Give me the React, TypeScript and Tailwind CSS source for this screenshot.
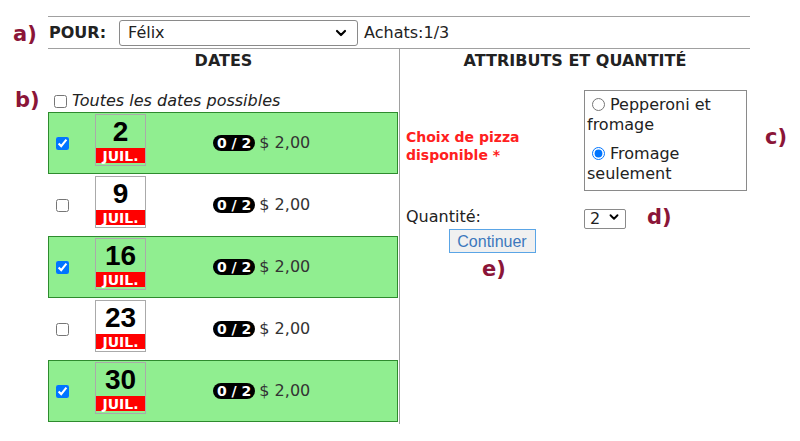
import React from 'react';
import { ChevronDown } from 'lucide-react';

type DateRow = { day: string; checked: boolean };

const rows: DateRow[] = [
  { day: '2', checked: true },
  { day: '9', checked: false },
  { day: '16', checked: true },
  { day: '23', checked: false },
  { day: '30', checked: true },
];

const Mark: React.FC<{ text: string; className: string }> = ({ text, className }) => (
  <span className={`absolute text-[21px] font-bold leading-none text-[#8b1538] ${className}`}>{text}</span>
);

const DateBox: React.FC<{ day: string; white: boolean }> = ({ day, white }) => (
  <div className={`mt-px flex h-[52px] w-[51px] flex-col self-start border border-[#aaaaaa] ${white ? 'bg-white' : ''}`}>
    <div className="flex h-[33px] items-center justify-center font-['Liberation_Sans',sans-serif] text-[28px] font-bold leading-none text-black">
      {day}
    </div>
    <div className="flex h-[15px] items-center justify-center bg-[#ff0000] text-[14px] font-bold leading-none text-white">
      JUIL.
    </div>
  </div>
);

const Row: React.FC<{ row: DateRow }> = ({ row }) => (
  <div
    className={`flex h-[62px] items-center border ${
      row.checked ? 'border-[#2e8b2e] bg-[#90ee90]' : 'border-transparent bg-white'
    }`}
  >
    <input type="checkbox" defaultChecked={row.checked} className="ml-[7px] h-[13px] w-[13px]" />
    <div className="ml-[26px] self-start">
      <DateBox day={row.day} white={!row.checked} />
    </div>
    <span className="ml-[67px] rounded-full bg-black px-[4px] text-[14px] font-bold leading-[16px] text-white">0 / 2</span>
    <span className="ml-[4px] text-[#333]">$ 2,00</span>
  </div>
);

export default function App() {
  return (
    <div className="relative h-[441px] w-[800px] overflow-hidden bg-white font-['DejaVu_Sans',sans-serif] text-[16px] text-[#222]">
      <Mark text="a)" className="left-[13px] top-[24px]" />
      <Mark text="b)" className="left-[15px] top-[90px]" />
      <Mark text="c)" className="left-[765px] top-[127px]" />
      <Mark text="d)" className="left-[647px] top-[207px]" />
      <Mark text="e)" className="left-[482px] top-[259px]" />

      <div className="ml-[48px] mt-[16px] w-[702px] border-t border-[#a0a0a0]">
        {/* POUR */}
        <div className="flex h-[32px] items-center border-b border-[#a0a0a0]">
          <span className="pl-px font-bold">POUR:</span>
          <div className="relative ml-[13px] h-[26px] w-[239px]">
            <select className="h-full w-full appearance-none rounded-[3px] border border-[#8a8a8a] bg-white pl-[8px] text-[#222]">
              <option>Félix</option>
            </select>
            <ChevronDown className="pointer-events-none absolute right-[9px] top-[5px] h-[16px] w-[16px] text-black" strokeWidth={3.2} />
          </div>
          <span className="ml-[6px]">Achats:1/3</span>
        </div>

        <div className="flex">
          {/* DATES */}
          <div className="w-[352px] border-r border-[#a0a0a0] pb-[2px]">
            <div className="flex h-[24px] items-center justify-center font-bold">DATES</div>
            <div className="mt-[20px] flex h-[16px] items-center pl-[6px]">
              <input type="checkbox" className="h-[13px] w-[13px]" />
              <span className="ml-[5px] italic">Toutes les dates possibles</span>
            </div>
            <div className="mr-px mt-[3px] flex flex-col">
              {rows.map((r) => (
                <Row key={r.day} row={r} />
              ))}
            </div>
          </div>

          {/* ATTRIBUTS */}
          <div className="flex-1">
            <div className="flex h-[24px] items-center justify-center font-bold">ATTRIBUTS ET QUANTITÉ</div>
            <div className="mt-[17px] grid grid-cols-[184px_163px]">
              <div className="flex items-center pl-[6px] pt-[10px] text-[14px] font-bold leading-[18px] text-[#ff2020]">
                Choix de pizza
                <br />
                disponible *
              </div>
              <div className="border border-[#8a8a8a] pb-[6px] pl-[2px] pt-[4px] leading-[20px]">
                <label className="block">
                  <input type="radio" name="pizza" className="ml-[5px] mr-[5px] h-[13px] w-[13px] align-[-1px]" />
                  Pepperoni et fromage
                </label>
                <label className="mt-[9px] block">
                  <input type="radio" name="pizza" defaultChecked className="ml-[5px] mr-[5px] h-[13px] w-[13px] align-[-1px]" />
                  Fromage seulement
                </label>
              </div>

              <div className="mt-[16px] flex h-[20px] items-center pl-[6px]">Quantité:</div>
              <div className="mt-[16px]">
                <div className="relative h-[20px] w-[42px]">
                  <select className="h-full w-full appearance-none rounded-[2px] border border-[#8a8a8a] bg-white pl-[5px] leading-[18px] text-[#222]">
                    <option>2</option>
                  </select>
                  <ChevronDown className="pointer-events-none absolute right-[5px] top-[3px] h-[14px] w-[14px] text-black" strokeWidth={3.2} />
                </div>
              </div>

              <div className="mt-[2px] flex justify-center">
                <button className="h-[24px] w-[87px] border border-[#5aa5e6] bg-[#f0f0f0] font-['Liberation_Sans',sans-serif] text-[16px] text-[#3d78bd]">
                  Continuer
                </button>
              </div>
              <div />
            </div>
          </div>
        </div>
      </div>
    </div>
  );
}
